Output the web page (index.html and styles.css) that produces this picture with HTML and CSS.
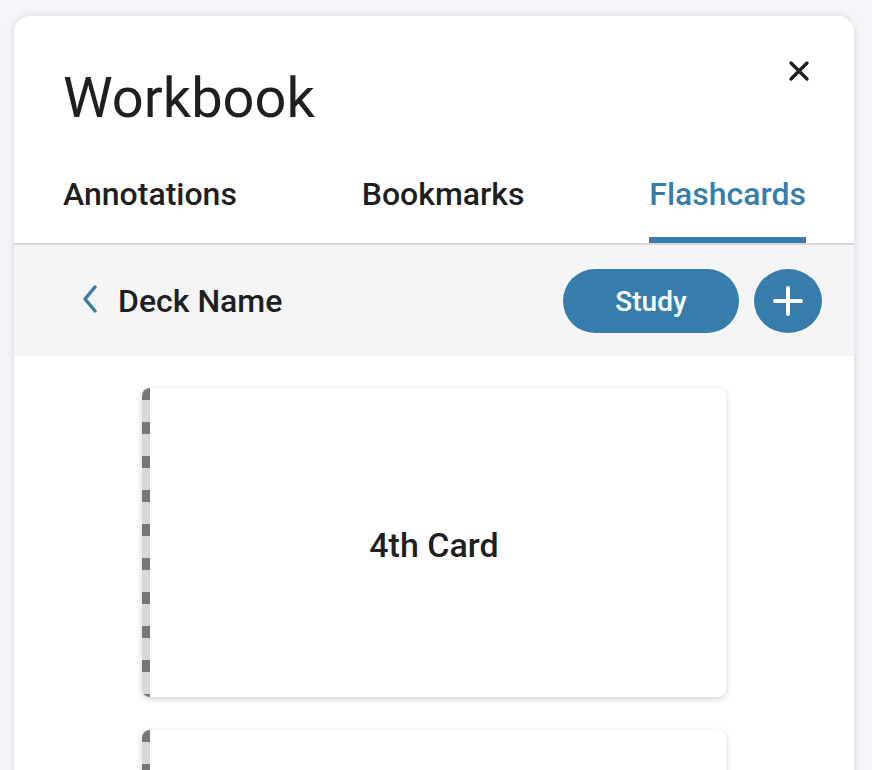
FILE: index.html
```html
<!DOCTYPE html>
<html lang="en">
<head>
  <meta charset="UTF-8">
  <title>Workbook</title>
  <link rel="stylesheet" href="styles.css">
</head>
<body>
  <div class="panel">
    <div class="header">
      <h1>Workbook</h1>
      <button class="close" aria-label="Close">
        <svg width="22" height="22" viewBox="0 0 22 22"><path d="M3 3 L19 19 M19 3 L3 19" stroke="#1f1f1f" stroke-width="3.4" stroke-linecap="round"/></svg>
      </button>
    </div>
    <div class="tabs">
      <div class="tab">Annotations</div>
      <div class="tab">Bookmarks</div>
      <div class="tab active">Flashcards</div>
    </div>
    <div class="toolbar">
      <div class="deck">
        <svg class="back" width="16" height="28" viewBox="0 0 16 28"><path d="M13 2 L3 14 L13 26" fill="none" stroke="#377dab" stroke-width="3.4" stroke-linecap="round" stroke-linejoin="round"/></svg>
        <span>Deck Name</span>
      </div>
      <div class="actions">
        <button class="study">Study</button>
        <button class="add" aria-label="Add">
          <svg width="30" height="30" viewBox="0 0 30 30"><path d="M15 2 V28 M2 15 H28" stroke="#fff" stroke-width="4" stroke-linecap="round"/></svg>
        </button>
      </div>
    </div>
    <div class="cards">
      <div class="card"><span>4th Card</span></div>
      <div class="card"></div>
    </div>
  </div>
</body>
</html>
```

FILE: styles.css
```css
body { margin: 0; background: #f5f6fa; font-family: Roboto, "Liberation Sans", sans-serif; color: #1f1f1f; overflow: hidden; }
.panel { margin: 16px 18px 0 14px; background: #fff; border-radius: 16px 16px 0 0; box-shadow: 0 0 8px rgba(0,0,0,0.12); height: 900px; }
.header { display: flex; justify-content: space-between; align-items: flex-start; padding: 44px 44px 0 49px; }
h1 { margin: 0; font-size: 56px; font-weight: 400; line-height: 76px; }
.close { background: none; border: none; padding: 0; cursor: pointer; }
.tabs { display: flex; justify-content: space-between; padding: 40px 48px 0 49px; border-bottom: 2px solid #d8d8d8; }
.tab { font-size: 32px; font-weight: 500; padding-bottom: 24px; border-bottom: 6px solid transparent; line-height: 37px; }
.tab.active { color: #377dab; border-bottom-color: #377dab; }
.toolbar { display: flex; justify-content: space-between; align-items: center; background: #f5f5f5; padding: 24px 32px 23px 68px; }
.deck { display: flex; align-items: center; gap: 20px; font-size: 32px; font-weight: 500; }
.back { margin-top: -4px; }
.actions { display: flex; gap: 15px; }
.study { width: 176px; height: 64px; border-radius: 32px; border: none; background: #377dab; color: #fff; font-family: inherit; font-size: 28px; font-weight: 500; }
.add { width: 68px; height: 64px; border-radius: 50%; border: none; background: #377dab; display: flex; align-items: center; justify-content: center; padding: 0; }
.cards { display: flex; flex-direction: column; align-items: center; gap: 33px; padding-top: 32px; }
.card { width: 584px; height: 309px; background: #fff; border-radius: 8px; box-shadow: 0 2px 6px rgba(0,0,0,0.18); display: flex; align-items: center; justify-content: center; font-size: 34px; font-weight: 500; position: relative; overflow: hidden; }
.card::before { content: ""; position: absolute; left: 0; top: 0; bottom: 0; width: 8px; background: repeating-linear-gradient(to bottom, #777 0 12px, #d9d9d9 12px 34px); }
.card span { margin-top: 4px; }
```
